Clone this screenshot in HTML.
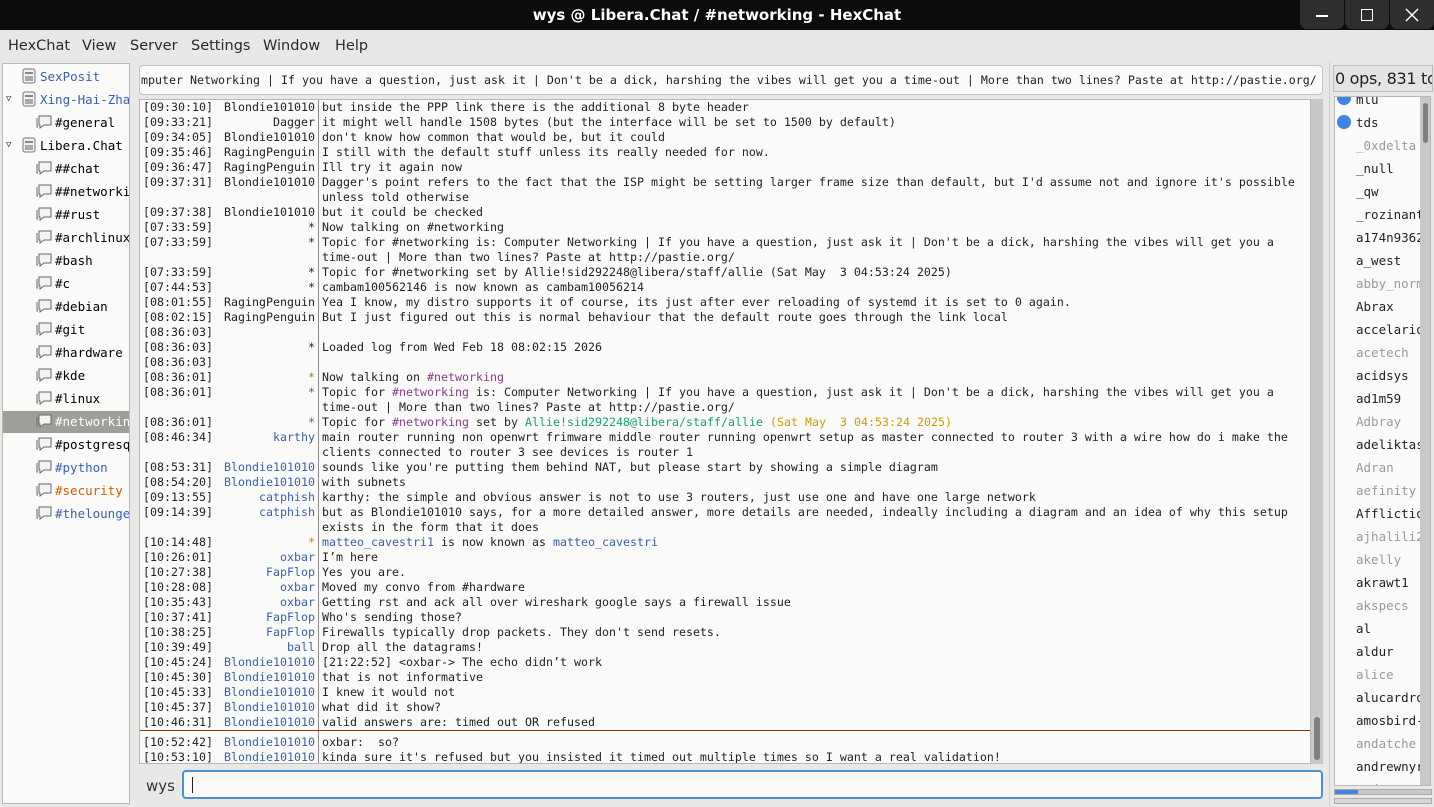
<!DOCTYPE html>
<html><head><meta charset="utf-8"><style>
*{margin:0;padding:0;box-sizing:border-box}
body{width:1434px;height:807px;background:#e8e8e7;position:relative;overflow:hidden;font-family:"DejaVu Sans","Liberation Sans",sans-serif}
.title{position:absolute;left:0;top:0;width:1434px;height:30px;background:#0c0c0c;color:#fff;font-weight:bold;font-size:15px;text-align:center;line-height:30px}
.wb{position:absolute;top:0;width:44px;height:29px;background:#2e2e2e;border-radius:0 0 7px 7px}
.menu{position:absolute;top:30px;left:0;width:1434px;height:32px;font-size:14.5px;color:#2a2a2a}
.menu span{position:absolute;top:8px}
.tree{position:absolute;left:2px;top:63px;width:128px;height:741px;background:#fafaf9;border:1px solid #b8b8b8;overflow:hidden;font-family:"DejaVu Sans Mono",monospace;font-size:12.5px}
.ti{position:absolute;height:23px;line-height:23px;white-space:nowrap}
.tri{position:absolute;left:3px;font-size:9px;color:#333;line-height:23px;height:23px}
.topic{position:absolute;left:139px;top:65px;width:1184px;height:30px;background:#fafaf9;border:1px solid #c4c4c4;border-radius:4px;font-family:"DejaVu Sans Mono",monospace;font-size:11.63px;line-height:28px;white-space:pre;overflow:hidden;color:#222}
.chat{position:absolute;left:139px;top:99px;width:1172px;height:665px;background:#fafaf9;border:1px solid #b8b8b8;overflow:hidden;font-family:"DejaVu Sans Mono",monospace;font-size:11.63px;color:#222}
.sep{position:absolute;left:178px;top:0;width:1px;height:665px;background:#8a8a8a}
.r{position:absolute;left:0;height:15px;line-height:15px;white-space:pre;width:1170px}
.t{position:absolute;left:3px}
.n{position:absolute;right:995px;text-align:right}
.m{position:absolute;left:182px}
.b{color:#3a5fb0}.p{color:#8a3c8c}.g{color:#1aa07a}.y{color:#c9a000}.gr{color:#6aa000}.o{color:#d08000}
.sb{position:absolute;left:1311px;top:99px;width:12px;height:665px;background:#c8c8c6}
.input{position:absolute;left:182px;top:770px;width:1141px;height:29px;background:#fafaf9;border:2px solid #4a90d9;border-radius:4px}
.rp{position:absolute;left:1329px;top:62px;width:1px;height:745px;background:#cfcfcf}
.hdr{position:absolute;left:1333px;top:65px;width:100px;height:27px;border:1px solid #bdbdbd;background:#e4e4e4;font-size:16px;line-height:25px;white-space:nowrap;overflow:hidden;color:#222;padding-left:1px;letter-spacing:-0.3px}
.nl{position:absolute;left:1334px;top:96px;width:97px;height:690px;background:#fafaf9;border:1px solid #b8b8b8;overflow:hidden;font-family:"DejaVu Sans Mono",monospace;font-size:12.5px}
.nk{position:absolute;left:21px;height:23px;line-height:23px;white-space:nowrap;color:#222}
.aw{color:#9a9a9a}
</style></head><body>
<div class="title">wys @ Libera.Chat / #networking - HexChat</div>
<div class="wb" style="left:1300px"><div style="position:absolute;left:16px;top:15px;width:12px;height:1.5px;background:#fff"></div></div>
<div class="wb" style="left:1345px"><div style="position:absolute;left:16px;top:9px;width:12px;height:12px;border:1.5px solid #fff"></div></div>
<div class="wb" style="left:1390px"><svg style="position:absolute;left:15px;top:8px" width="14" height="14"><path d="M1 1L13 13M13 1L1 13" stroke="#fff" stroke-width="1.5"/></svg></div>
<div class="menu"><span style="left:8px">HexChat</span><span style="left:82px">View</span><span style="left:130px">Server</span><span style="left:191px">Settings</span><span style="left:263px">Window</span><span style="left:335px">Help</span></div>

<div class="tree">
<svg width="0" height="0" style="position:absolute"><defs>
<g id="srv"><rect x="1" y="1" width="12" height="14" rx="2" fill="#f0f0f0" stroke="#777"/><rect x="3" y="4" width="8" height="2" fill="#888"/><rect x="3" y="8" width="8" height="5" fill="#aaa"/></g>
<g id="ch"><path d="M3 2H15V11H8L4 14V11H3Z" fill="#f4f4f4" stroke="#666"/><path d="M1 4V13H2" fill="none" stroke="#666"/></g>
</defs></svg>
<div class="ti" style="top:1px;left:19px"><svg width="15" height="16" style="vertical-align:-3px"><use href="#srv"/></svg><span style="color:#3a5fb0;margin-left:3px">SexPosit</span></div>
<div class="tri" style="top:24px">▽</div>
<div class="ti" style="top:24px;left:19px"><svg width="15" height="16" style="vertical-align:-3px"><use href="#srv"/></svg><span style="color:#3a5fb0;margin-left:3px">Xing-Hai-Zhang</span></div>
<div class="ti" style="top:47px;left:33px"><svg width="16" height="16" style="vertical-align:-3px"><use href="#ch"/></svg><span style="margin-left:3px">#general</span></div>
<div class="tri" style="top:70px">▽</div>
<div class="ti" style="top:70px;left:19px"><svg width="15" height="16" style="vertical-align:-3px"><use href="#srv"/></svg><span style="margin-left:3px">Libera.Chat</span></div>
<div class="ti" style="top:93px;left:33px"><svg width="16" height="16" style="vertical-align:-3px"><use href="#ch"/></svg><span style="margin-left:3px">##chat</span></div>
<div class="ti" style="top:116px;left:33px"><svg width="16" height="16" style="vertical-align:-3px"><use href="#ch"/></svg><span style="margin-left:3px">##networking</span></div>
<div class="ti" style="top:139px;left:33px"><svg width="16" height="16" style="vertical-align:-3px"><use href="#ch"/></svg><span style="margin-left:3px">##rust</span></div>
<div class="ti" style="top:162px;left:33px"><svg width="16" height="16" style="vertical-align:-3px"><use href="#ch"/></svg><span style="margin-left:3px">#archlinux</span></div>
<div class="ti" style="top:185px;left:33px"><svg width="16" height="16" style="vertical-align:-3px"><use href="#ch"/></svg><span style="margin-left:3px">#bash</span></div>
<div class="ti" style="top:208px;left:33px"><svg width="16" height="16" style="vertical-align:-3px"><use href="#ch"/></svg><span style="margin-left:3px">#c</span></div>
<div class="ti" style="top:231px;left:33px"><svg width="16" height="16" style="vertical-align:-3px"><use href="#ch"/></svg><span style="margin-left:3px">#debian</span></div>
<div class="ti" style="top:254px;left:33px"><svg width="16" height="16" style="vertical-align:-3px"><use href="#ch"/></svg><span style="margin-left:3px">#git</span></div>
<div class="ti" style="top:277px;left:33px"><svg width="16" height="16" style="vertical-align:-3px"><use href="#ch"/></svg><span style="margin-left:3px">#hardware</span></div>
<div class="ti" style="top:300px;left:33px"><svg width="16" height="16" style="vertical-align:-3px"><use href="#ch"/></svg><span style="margin-left:3px">#kde</span></div>
<div class="ti" style="top:323px;left:33px"><svg width="16" height="16" style="vertical-align:-3px"><use href="#ch"/></svg><span style="margin-left:3px">#linux</span></div>
<div style="position:absolute;left:0;top:347px;width:128px;height:22px;background:#a09e9b"></div>
<div class="ti" style="top:346px;left:33px;color:#fff"><svg width="16" height="16" style="vertical-align:-3px"><use href="#ch"/></svg><span style="margin-left:3px">#networking</span></div>
<div class="ti" style="top:369px;left:33px"><svg width="16" height="16" style="vertical-align:-3px"><use href="#ch"/></svg><span style="margin-left:3px">#postgresql</span></div>
<div class="ti" style="top:392px;left:33px;color:#3a5fb0"><svg width="16" height="16" style="vertical-align:-3px"><use href="#ch"/></svg><span style="margin-left:3px">#python</span></div>
<div class="ti" style="top:415px;left:33px;color:#d06000"><svg width="16" height="16" style="vertical-align:-3px"><use href="#ch"/></svg><span style="margin-left:3px">#security</span></div>
<div class="ti" style="top:438px;left:33px;color:#3a5fb0"><svg width="16" height="16" style="vertical-align:-3px"><use href="#ch"/></svg><span style="margin-left:3px">#thelounge</span></div>
</div>

<div class="topic"><span style="margin-left:1px">mputer Networking | If you have a question, just ask it | Don't be a dick, harshing the vibes will get you a time-out | More than two lines? Paste at http://pastie.org/</span></div>

<div class="chat">
<div class="sep"></div>
<div class="r" style="top:0px"><span class="t">[09:30:10]</span><span class="n">Blondie101010</span><span class="m">but inside the PPP link there is the additional 8 byte header</span></div>
<div class="r" style="top:15px"><span class="t">[09:33:21]</span><span class="n">Dagger</span><span class="m">it might well handle 1508 bytes (but the interface will be set to 1500 by default)</span></div>
<div class="r" style="top:30px"><span class="t">[09:34:05]</span><span class="n">Blondie101010</span><span class="m">don't know how common that would be, but it could</span></div>
<div class="r" style="top:45px"><span class="t">[09:35:46]</span><span class="n">RagingPenguin</span><span class="m">I still with the default stuff unless its really needed for now.</span></div>
<div class="r" style="top:60px"><span class="t">[09:36:47]</span><span class="n">RagingPenguin</span><span class="m">Ill try it again now</span></div>
<div class="r" style="top:75px"><span class="t">[09:37:31]</span><span class="n">Blondie101010</span><span class="m">Dagger's point refers to the fact that the ISP might be setting larger frame size than default, but I'd assume not and ignore it's possible</span></div>
<div class="r" style="top:90px"><span class="m">unless told otherwise</span></div>
<div class="r" style="top:105px"><span class="t">[09:37:38]</span><span class="n">Blondie101010</span><span class="m">but it could be checked</span></div>
<div class="r" style="top:120px"><span class="t">[07:33:59]</span><span class="n">*</span><span class="m">Now talking on #networking</span></div>
<div class="r" style="top:135px"><span class="t">[07:33:59]</span><span class="n">*</span><span class="m">Topic for #networking is: Computer Networking | If you have a question, just ask it | Don't be a dick, harshing the vibes will get you a</span></div>
<div class="r" style="top:150px"><span class="m">time-out | More than two lines? Paste at http://pastie.org/</span></div>
<div class="r" style="top:165px"><span class="t">[07:33:59]</span><span class="n">*</span><span class="m">Topic for #networking set by Allie!sid292248@libera/staff/allie (Sat May  3 04:53:24 2025)</span></div>
<div class="r" style="top:180px"><span class="t">[07:44:53]</span><span class="n">*</span><span class="m">cambam100562146 is now known as cambam10056214</span></div>
<div class="r" style="top:195px"><span class="t">[08:01:55]</span><span class="n">RagingPenguin</span><span class="m">Yea I know, my distro supports it of course, its just after ever reloading of systemd it is set to 0 again.</span></div>
<div class="r" style="top:210px"><span class="t">[08:02:15]</span><span class="n">RagingPenguin</span><span class="m">But I just figured out this is normal behaviour that the default route goes through the link local</span></div>
<div class="r" style="top:225px"><span class="t">[08:36:03]</span></div>
<div class="r" style="top:240px"><span class="t">[08:36:03]</span><span class="n">*</span><span class="m">Loaded log from Wed Feb 18 08:02:15 2026</span></div>
<div class="r" style="top:255px"><span class="t">[08:36:03]</span></div>
<div class="r" style="top:270px"><span class="t">[08:36:01]</span><span class="n gr">*</span><span class="m">Now talking on <span class="p">#networking</span></span></div>
<div class="r" style="top:285px"><span class="t">[08:36:01]</span><span class="n p">*</span><span class="m">Topic for <span class="p">#networking</span> is: Computer Networking | If you have a question, just ask it | Don't be a dick, harshing the vibes will get you a</span></div>
<div class="r" style="top:300px"><span class="m">time-out | More than two lines? Paste at http://pastie.org/</span></div>
<div class="r" style="top:315px"><span class="t">[08:36:01]</span><span class="n p">*</span><span class="m">Topic for <span class="p">#networking</span> set by <span class="g">Allie!sid292248@libera/staff/allie</span> <span class="y">(Sat May  3 04:53:24 2025)</span></span></div>
<div class="r" style="top:330px"><span class="t">[08:46:34]</span><span class="n b">karthy</span><span class="m">main router running non openwrt frimware middle router running openwrt setup as master connected to router 3 with a wire how do i make the</span></div>
<div class="r" style="top:345px"><span class="m">clients connected to router 3 see devices is router 1</span></div>
<div class="r" style="top:360px"><span class="t">[08:53:31]</span><span class="n b">Blondie101010</span><span class="m">sounds like you're putting them behind NAT, but please start by showing a simple diagram</span></div>
<div class="r" style="top:375px"><span class="t">[08:54:20]</span><span class="n b">Blondie101010</span><span class="m">with subnets</span></div>
<div class="r" style="top:390px"><span class="t">[09:13:55]</span><span class="n b">catphish</span><span class="m">karthy: the simple and obvious answer is not to use 3 routers, just use one and have one large network</span></div>
<div class="r" style="top:405px"><span class="t">[09:14:39]</span><span class="n b">catphish</span><span class="m">but as Blondie101010 says, for a more detailed answer, more details are needed, indeally including a diagram and an idea of why this setup</span></div>
<div class="r" style="top:420px"><span class="m">exists in the form that it does</span></div>
<div class="r" style="top:435px"><span class="t">[10:14:48]</span><span class="n o">*</span><span class="m"><span class="b">matteo_cavestri1</span> is now known as <span class="b">matteo_cavestri</span></span></div>
<div class="r" style="top:450px"><span class="t">[10:26:01]</span><span class="n b">oxbar</span><span class="m">I’m here</span></div>
<div class="r" style="top:465px"><span class="t">[10:27:38]</span><span class="n b">FapFlop</span><span class="m">Yes you are.</span></div>
<div class="r" style="top:480px"><span class="t">[10:28:08]</span><span class="n b">oxbar</span><span class="m">Moved my convo from #hardware</span></div>
<div class="r" style="top:495px"><span class="t">[10:35:43]</span><span class="n b">oxbar</span><span class="m">Getting rst and ack all over wireshark google says a firewall issue</span></div>
<div class="r" style="top:510px"><span class="t">[10:37:41]</span><span class="n b">FapFlop</span><span class="m">Who's sending those?</span></div>
<div class="r" style="top:525px"><span class="t">[10:38:25]</span><span class="n b">FapFlop</span><span class="m">Firewalls typically drop packets. They don't send resets.</span></div>
<div class="r" style="top:540px"><span class="t">[10:39:49]</span><span class="n b">ball</span><span class="m">Drop all the datagrams!</span></div>
<div class="r" style="top:555px"><span class="t">[10:45:24]</span><span class="n b">Blondie101010</span><span class="m">[21:22:52] &lt;oxbar-&gt; The echo didn’t work</span></div>
<div class="r" style="top:570px"><span class="t">[10:45:30]</span><span class="n b">Blondie101010</span><span class="m">that is not informative</span></div>
<div class="r" style="top:585px"><span class="t">[10:45:33]</span><span class="n b">Blondie101010</span><span class="m">I knew it would not</span></div>
<div class="r" style="top:600px"><span class="t">[10:45:37]</span><span class="n b">Blondie101010</span><span class="m">what did it show?</span></div>
<div class="r" style="top:615px"><span class="t">[10:46:31]</span><span class="n b">Blondie101010</span><span class="m">valid answers are: timed out OR refused</span></div>
<div style="position:absolute;left:0;top:630px;width:1172px;height:1px;background:#8b3a00"></div>
<div class="r" style="top:635px"><span class="t">[10:52:42]</span><span class="n b">Blondie101010</span><span class="m">oxbar:  so?</span></div>
<div class="r" style="top:650px"><span class="t">[10:53:10]</span><span class="n b">Blondie101010</span><span class="m">kinda sure it's refused but you insisted it timed out multiple times so I want a real validation!</span></div>
</div>
<div class="sb"><div style="position:absolute;left:3px;top:618px;width:6px;height:43px;background:#808080;border-radius:3px"></div></div>

<div style="position:absolute;left:146px;top:777px;font-size:15px;color:#333">wys</div>
<div class="input"><div style="position:absolute;left:8px;top:5px;width:1px;height:16px;background:#222"></div></div>

<div class="rp"></div>
<div class="hdr">0 ops, 831 total</div>
<div class="nl">
<div style="position:absolute;left:2px;top:-6px;width:14px;height:14px;border-radius:50%;background:#3e86e0"></div>
<div class="nk" style="top:-9px">mlu</div>
<div style="position:absolute;left:2px;top:18px;width:14px;height:14px;border-radius:50%;background:#3e86e0"></div>
<div class="nk" style="top:14px">tds</div>
<div class="nk aw" style="top:37px">_0xdelta</div>
<div class="nk" style="top:60px">_null</div>
<div class="nk" style="top:83px">_qw</div>
<div class="nk" style="top:106px">_rozinante</div>
<div class="nk" style="top:129px">a174n9362</div>
<div class="nk" style="top:152px">a_west</div>
<div class="nk aw" style="top:175px">abby_norm</div>
<div class="nk" style="top:198px">Abrax</div>
<div class="nk" style="top:221px">accelario</div>
<div class="nk aw" style="top:244px">acetech</div>
<div class="nk" style="top:267px">acidsys</div>
<div class="nk" style="top:290px">ad1m59</div>
<div class="nk aw" style="top:313px">Adbray</div>
<div class="nk" style="top:336px">adeliktas</div>
<div class="nk aw" style="top:359px">Adran</div>
<div class="nk aw" style="top:382px">aefinity</div>
<div class="nk" style="top:405px">Afflictio</div>
<div class="nk aw" style="top:428px">ajhalili2</div>
<div class="nk aw" style="top:451px">akelly</div>
<div class="nk" style="top:474px">akrawt1</div>
<div class="nk aw" style="top:497px">akspecs</div>
<div class="nk" style="top:520px">al</div>
<div class="nk" style="top:543px">aldur</div>
<div class="nk aw" style="top:566px">alice</div>
<div class="nk" style="top:589px">alucardro</div>
<div class="nk" style="top:612px">amosbird-</div>
<div class="nk aw" style="top:635px">andatche</div>
<div class="nk" style="top:658px">andrewnyr</div>
<div class="nk" style="top:681px">andy</div>
<div style="position:absolute;left:85px;top:0;width:11px;height:690px;background:#c8c8c6"><div style="position:absolute;left:3px;top:6px;width:5px;height:40px;background:#808080;border-radius:3px"></div></div>
</div>
<div style="position:absolute;left:1334px;top:789px;width:98px;height:6px;background:#c8c8c6;border:1px solid #aaa"><div style="width:23px;height:4px;background:#3e86e0"></div></div>
<div style="position:absolute;left:1334px;top:798px;width:98px;height:6px;background:#d8d8d6;border:1px solid #aaa"></div>
</body></html>
